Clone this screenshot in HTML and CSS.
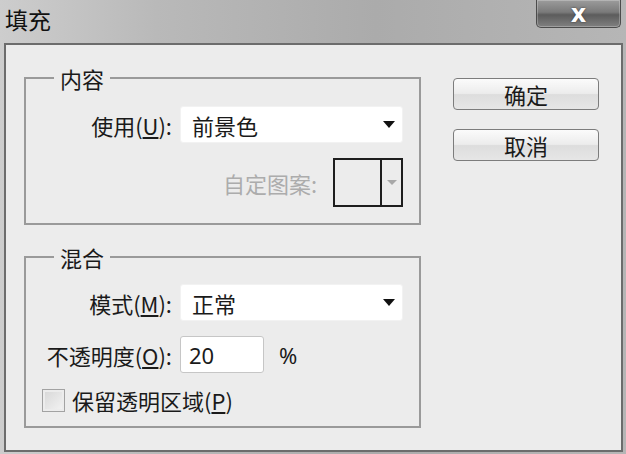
FILE: index.html
```html
<!DOCTYPE html>
<html lang="zh-CN">
<head>
  <meta charset="UTF-8">
  <title>填充</title>
  <link rel="stylesheet" href="styles.css">
</head>
<body>
  <div class="window">
    <div class="titlebar">
      <div class="title">填充</div>
      <button class="close">x</button>
    </div>
    <div class="panel">
      <div class="groups">
        <fieldset class="group group-content">
          <legend>内容</legend>
          <div class="form">
            <label class="label">使用(<u>U</u>):</label>
            <div class="select">
              <span>前景色</span>
              <span class="caret"></span>
            </div>
            <div class="pattern-row">
              <span class="label-disabled">自定图案:</span>
              <div class="swatch">
                <div class="swatch-preview"></div>
                <div class="swatch-arrow"><span class="caret caret-small"></span></div>
              </div>
            </div>
          </div>
        </fieldset>

        <fieldset class="group group-blend">
          <legend>混合</legend>
          <div class="form">
            <label class="label">模式(<u>M</u>):</label>
            <div class="select">
              <span>正常</span>
              <span class="caret"></span>
            </div>
            <label class="label">不透明度(<u>O</u>):</label>
            <div class="opacity-row">
              <div class="input">20</div>
              <span class="unit">%</span>
            </div>
            <div class="check-row">
              <span class="checkbox"></span>
              <span>保留透明区域(<u>P</u>)</span>
            </div>
          </div>
        </fieldset>
      </div>

      <div class="actions">
        <button class="button">确定</button>
        <button class="button">取消</button>
      </div>
    </div>
  </div>
</body>
</html>
```

FILE: styles.css
```css
* {
  box-sizing: border-box;
  margin: 0;
  padding: 0;
}

body {
  font-family: "Noto Sans CJK SC", "Noto Sans", sans-serif;
  font-size: 22px;
  color: #1a1a1a;
}

.window {
  display: flex;
  flex-direction: column;
  width: 626px;
  height: 454px;
  background: linear-gradient(to right, #cdcdcd 0%, #b9b9b9 25%, #ababab 60%, #b6b6b6 100%);
}

.titlebar {
  display: flex;
  justify-content: space-between;
  align-items: flex-start;
  height: 43px;
  padding-right: 5px;
}

.title {
  padding: 4px 0 0 5px;
  font-size: 23px;
  line-height: 30px;
  color: #111;
}

.close {
  width: 85px;
  height: 28px;
  border: 1px solid #4c4c4c;
  border-top: none;
  border-radius: 0 0 5px 5px;
  background: linear-gradient(#9c9c9c 0%, #7a7a7a 45%, #5c5c5c 55%, #808080 100%);
  color: #fff;
  font-family: "DejaVu Sans", sans-serif;
  font-size: 24px;
  font-weight: bold;
  line-height: 22px;
  text-shadow: 0 0 2px #333;
  box-shadow: inset 0 0 0 1px rgba(255, 255, 255, 0.25);
}

.panel {
  flex: 1;
  display: flex;
  margin: 0 3px 2px 4px;
  padding: 21px 0 0 18px;
  border: 2px solid #6c6c6c;
  background-color: #ececec;
}

.groups {
  width: 397px;
}

.group {
  border: 2px solid #9a9a9a;
  padding: 16px 16px 16px 14px;
}

.group legend {
  margin-left: 14px;
  padding: 0 6px;
  line-height: 24px;
}

.group-blend {
  margin-top: 20px;
  padding-top: 15px;
  padding-bottom: 14px;
}

.form {
  display: grid;
  grid-template-columns: 132px 1fr;
  column-gap: 8px;
  row-gap: 15px;
  align-items: center;
}

.label {
  text-align: right;
  white-space: nowrap;
}

.select {
  display: flex;
  justify-content: space-between;
  align-items: center;
  height: 37px;
  padding: 0 7px 0 11px;
  background-color: #fff;
  border: 1px solid #f2f2f2;
  border-radius: 3px;
}

.caret {
  width: 0;
  height: 0;
  border-left: 6px solid transparent;
  border-right: 6px solid transparent;
  border-top: 7px solid #111;
}

.caret-small {
  border-left-width: 5px;
  border-right-width: 5px;
  border-top: 5px solid #a8a8a8;
}

.pattern-row {
  grid-column: 2;
  display: flex;
  justify-content: flex-end;
  align-items: center;
  gap: 16px;
}

.label-disabled {
  color: #acacac;
}

.swatch {
  display: flex;
  width: 70px;
  height: 49px;
  border: 2px solid #1e1e1e;
}

.swatch-preview {
  flex: 1;
}

.swatch-arrow {
  display: flex;
  align-items: center;
  justify-content: center;
  width: 21px;
  border-left: 2px solid #1e1e1e;
}

.opacity-row {
  display: flex;
  align-items: center;
}

.input {
  display: flex;
  align-items: center;
  width: 84px;
  height: 37px;
  padding-left: 8px;
  background-color: #fff;
  border: 1px solid #c6c6c6;
  border-radius: 3px;
  font-family: "Noto Sans", sans-serif;
  font-size: 22px;
}

.unit {
  margin-left: 15px;
  font-family: "Noto Sans", sans-serif;
  font-size: 22px;
}

.check-row {
  grid-column: 1 / span 2;
  display: flex;
  align-items: center;
  gap: 7px;
  height: 24px;
  margin-left: 2px;
}

.checkbox {
  width: 23px;
  height: 23px;
  border: 1px solid #a2a2a2;
  background: linear-gradient(135deg, #d6d6d6, #f4f4f4);
  box-shadow: inset 0 0 0 2px #ececec;
}

.actions {
  display: flex;
  flex-direction: column;
  gap: 19px;
  margin: 12px 0 0 32px;
}

.button {
  width: 146px;
  height: 32px;
  border: 1px solid #7c7c7c;
  border-radius: 4px;
  background: linear-gradient(#fbfbfb 0%, #ececec 48%, #dddddd 52%, #e6e6e6 100%);
  font-family: "Noto Sans CJK SC", sans-serif;
  font-size: 22px;
  line-height: 28px;
  color: #1a1a1a;
}
```
